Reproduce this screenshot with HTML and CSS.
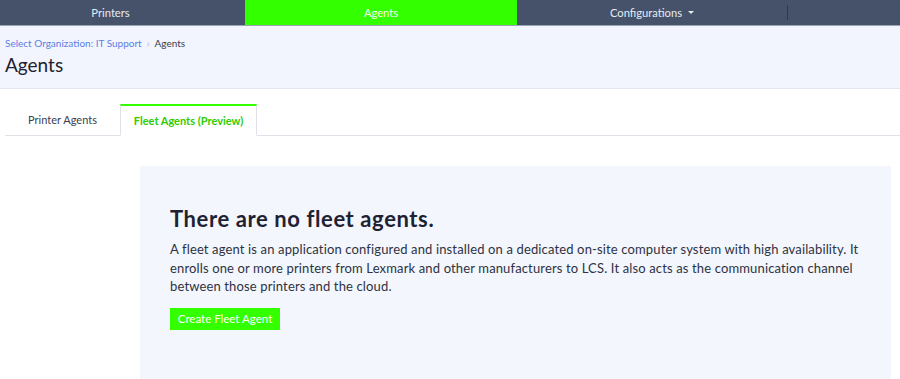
FILE: index.html
```html
<!DOCTYPE html>
<html lang="en">
<head>
<meta charset="utf-8">
<title>Agents</title>
<link rel="stylesheet" href="styles.css">
</head>
<body>
<nav class="topnav">
  <a class="nav-item nav-printers">Printers</a>
  <a class="nav-item nav-active">Agents</a>
  <a class="nav-item nav-config">Configurations <span class="caret"></span></a>
  <span class="nav-sep"></span>
</nav>
<header class="page-header">
  <div class="breadcrumb"><a class="crumb-link">Select Organization: IT Support</a><span class="crumb-sep">›</span><span class="crumb-current">Agents</span></div>
  <h1 class="page-title">Agents</h1>
</header>
<div class="tabs">
  <div class="tab">Printer Agents</div>
  <div class="tab tab-active">Fleet Agents (Preview)</div>
  <div class="tab-fill"></div>
</div>
<section class="empty">
  <h2 class="empty-title">There are no fleet agents.</h2>
  <p class="empty-text">A fleet agent is an application configured and installed on a dedicated on-site computer system with high availability. It enrolls one or more printers from Lexmark and other manufacturers to LCS. It also acts as the communication channel between those printers and the cloud.</p>
  <button class="btn-primary">Create Fleet Agent</button>
</section>
</body>
</html>
```
FILE: styles.css
```css
* { box-sizing: border-box; }
html, body { margin: 0; padding: 0; background: #fff; }
body {
  font-family: "Lato", "Noto Sans", sans-serif;
  color: #2b2f3d;
  width: 900px;
  height: 379px;
  overflow: hidden;
}
.topnav {
  display: flex;
  height: 26px;
  background: #45526a;
  border-bottom: 1px solid #9ca5b5;
  align-items: stretch;
}
.nav-item {
  display: flex;
  align-items: center;
  justify-content: center;
  color: #e6eaf2;
  font-size: 11.2px;
  padding-bottom: 1px;
}
.nav-printers { width: 245px; padding-right: 24px; }
.nav-active { width: 272px; background: #33ff00; color: #f4fff0; }
.nav-config { width: 270px; }
.caret {
  display: inline-block;
  width: 0; height: 0;
  margin-left: 6px;
  border-left: 3px solid transparent;
  border-right: 3px solid transparent;
  border-top: 3px solid #e6eaf2;
}
.nav-sep {
  width: 1px;
  margin: 5px 0 5px;
  background: #2f394b;
}
.page-header {
  background: #f2f5fd;
  border-bottom: 1px solid #e2e6ee;
  padding: 11px 5px 11px;
  height: 63px;
}
.breadcrumb {
  font-size: 10px;
  line-height: 12px;
  display: flex;
  align-items: center;
}
.crumb-link { color: #5b7fe6; }
.crumb-sep { color: #b0b6c2; margin: 0 5px 0 5px; font-size: 10px; }
.crumb-current { color: #3a3f4c; }
.page-title {
  margin: 5px 0 0;
  font-size: 19px;
  font-weight: 400;
  line-height: 22px;
  color: #1f2230;
}
.tabs {
  display: flex;
  margin: 15px 0 0 5px;
  height: 32px;
}
.tab {
  display: flex;
  align-items: center;
  justify-content: center;
  font-size: 11px;
  color: #3b4050;
  border-bottom: 1px solid #dfe3e9;
  width: 115px;
}
.tab-active {
  width: 137px;
  border: 1px solid #dfe3e9;
  border-top: 2px solid #33ff00;
  border-bottom: 1px solid #fff;
  color: #2fcc00;
  font-weight: 700;
  padding-bottom: 1px;
}
.tab-fill { flex: 1; border-bottom: 1px solid #dfe3e9; }
.empty {
  margin: 30px 9px 0 140px;
  background: #f3f6fd;
  padding: 40px 30px 0;
  height: 214px;
}
.empty-title {
  margin: 0;
  font-size: 22px;
  line-height: 26px;
  font-weight: 700;
  letter-spacing: 0.6px;
  color: #1f2233;
}
.empty-text {
  margin: 8px 0 0;
  font-size: 13px;
  line-height: 18.5px;
  letter-spacing: 0.14px;
  color: #2e3242;
  max-width: 710px;
}
.btn-primary {
  margin-top: 12px;
  width: 110px;
  height: 22px;
  background: #33ff00;
  border: none;
  color: #fff;
  font-family: inherit;
  font-size: 11.5px;
  padding: 0;
}
```
